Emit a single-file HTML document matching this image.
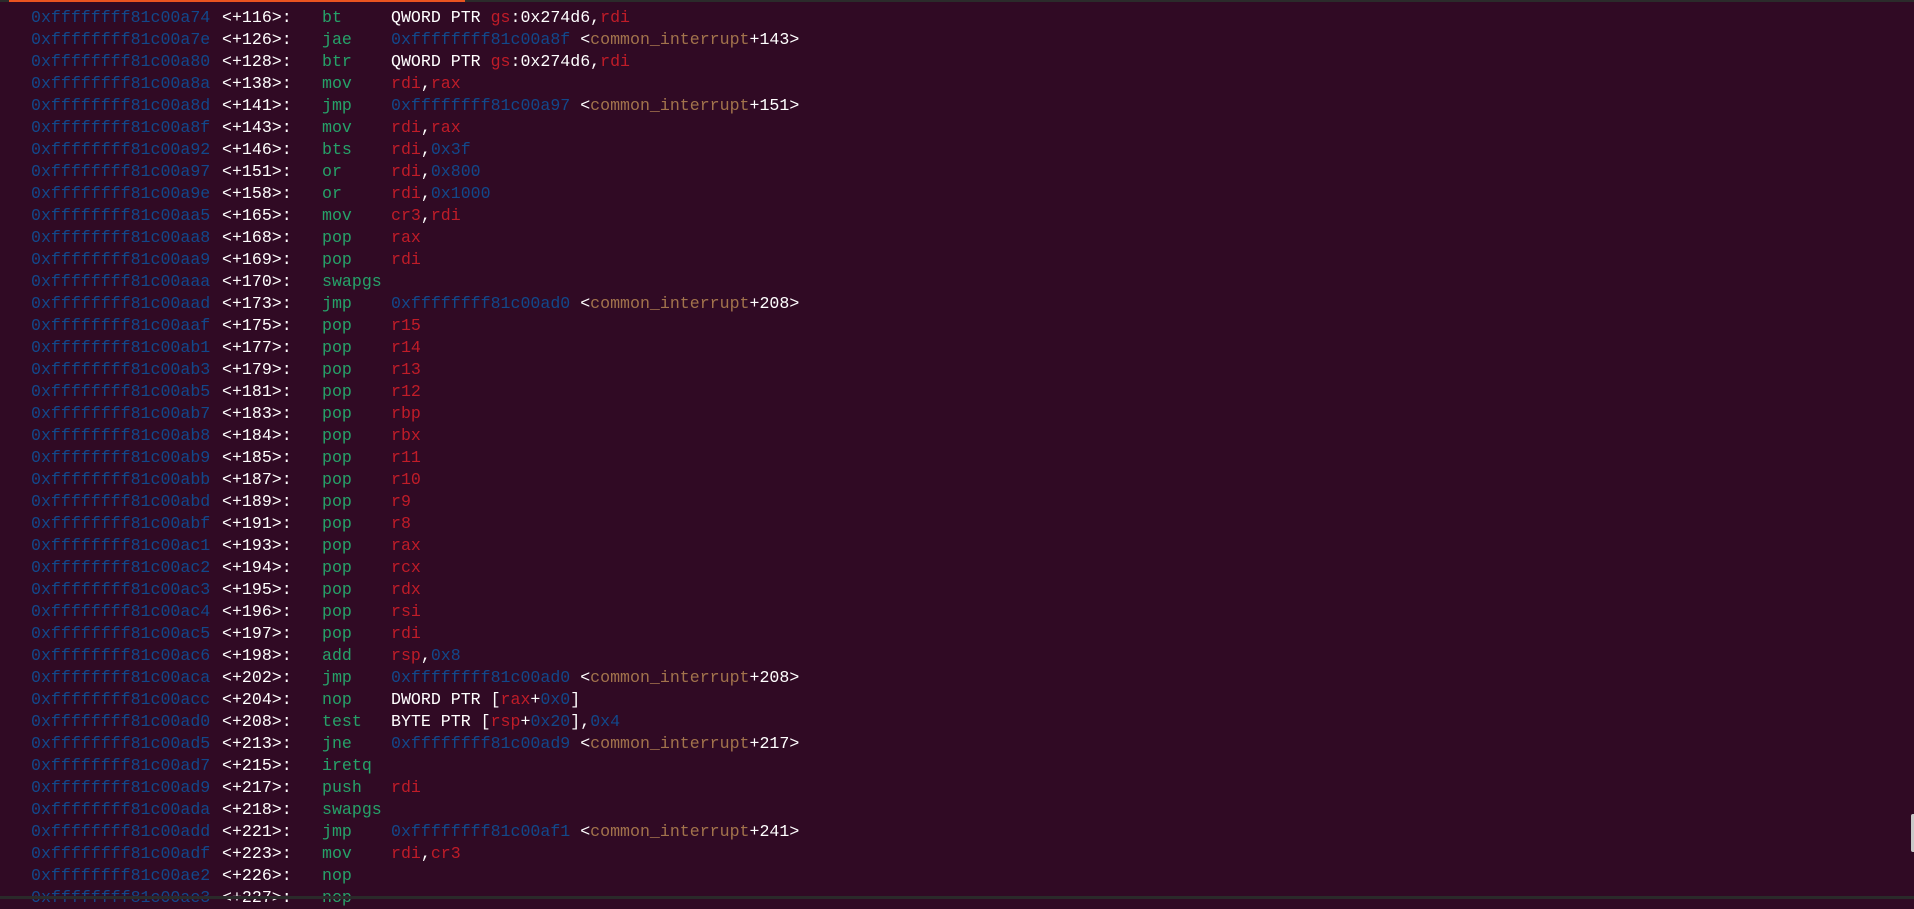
<!DOCTYPE html>
<html><head><meta charset="utf-8"><style>
html,body{margin:0;padding:0;width:1914px;height:899px;overflow:hidden;background:#300a24;}
#top{position:absolute;left:0;top:0;width:1914px;height:2px;background:#2b2b2b;}
#tab{position:absolute;left:9px;top:0;width:456px;height:2px;background:#e95420;}
#bot{position:absolute;left:0;top:896px;width:1914px;height:3px;background:#2a2a2a;}
#sb{position:absolute;left:1911px;top:814px;width:3px;height:38px;background:#c8c8c8;border-radius:2px 0 0 2px;}
.l{position:absolute;left:0;height:22px;line-height:22px;font-family:"Liberation Mono",monospace;font-size:16.6px;white-space:pre;color:#fff;}
.a{position:absolute;left:31px;color:#12488b;}
.o{position:absolute;left:222px;color:#fff;}
.m{position:absolute;left:322px;color:#26a269;}
.p{position:absolute;left:391px;color:#fff;}
.b{color:#12488b}.r{color:#c01c28}.s{color:#a2734c}
</style></head><body>
<div id="top"></div><div id="tab"></div>
<div class="l" style="top:7px"><span class="a">0xffffffff81c00a74</span><span class="o">&lt;+116&gt;:</span><span class="m">bt</span><span class="p">QWORD PTR <span class="r">gs</span>:0x274d6,<span class="r">rdi</span></span></div>
<div class="l" style="top:29px"><span class="a">0xffffffff81c00a7e</span><span class="o">&lt;+126&gt;:</span><span class="m">jae</span><span class="p"><span class="b">0xffffffff81c00a8f</span> &lt;<span class="s">common_interrupt</span>+143&gt;</span></div>
<div class="l" style="top:51px"><span class="a">0xffffffff81c00a80</span><span class="o">&lt;+128&gt;:</span><span class="m">btr</span><span class="p">QWORD PTR <span class="r">gs</span>:0x274d6,<span class="r">rdi</span></span></div>
<div class="l" style="top:73px"><span class="a">0xffffffff81c00a8a</span><span class="o">&lt;+138&gt;:</span><span class="m">mov</span><span class="p"><span class="r">rdi</span>,<span class="r">rax</span></span></div>
<div class="l" style="top:95px"><span class="a">0xffffffff81c00a8d</span><span class="o">&lt;+141&gt;:</span><span class="m">jmp</span><span class="p"><span class="b">0xffffffff81c00a97</span> &lt;<span class="s">common_interrupt</span>+151&gt;</span></div>
<div class="l" style="top:117px"><span class="a">0xffffffff81c00a8f</span><span class="o">&lt;+143&gt;:</span><span class="m">mov</span><span class="p"><span class="r">rdi</span>,<span class="r">rax</span></span></div>
<div class="l" style="top:139px"><span class="a">0xffffffff81c00a92</span><span class="o">&lt;+146&gt;:</span><span class="m">bts</span><span class="p"><span class="r">rdi</span>,<span class="b">0x3f</span></span></div>
<div class="l" style="top:161px"><span class="a">0xffffffff81c00a97</span><span class="o">&lt;+151&gt;:</span><span class="m">or</span><span class="p"><span class="r">rdi</span>,<span class="b">0x800</span></span></div>
<div class="l" style="top:183px"><span class="a">0xffffffff81c00a9e</span><span class="o">&lt;+158&gt;:</span><span class="m">or</span><span class="p"><span class="r">rdi</span>,<span class="b">0x1000</span></span></div>
<div class="l" style="top:205px"><span class="a">0xffffffff81c00aa5</span><span class="o">&lt;+165&gt;:</span><span class="m">mov</span><span class="p"><span class="r">cr3</span>,<span class="r">rdi</span></span></div>
<div class="l" style="top:227px"><span class="a">0xffffffff81c00aa8</span><span class="o">&lt;+168&gt;:</span><span class="m">pop</span><span class="p"><span class="r">rax</span></span></div>
<div class="l" style="top:249px"><span class="a">0xffffffff81c00aa9</span><span class="o">&lt;+169&gt;:</span><span class="m">pop</span><span class="p"><span class="r">rdi</span></span></div>
<div class="l" style="top:271px"><span class="a">0xffffffff81c00aaa</span><span class="o">&lt;+170&gt;:</span><span class="m">swapgs</span></div>
<div class="l" style="top:293px"><span class="a">0xffffffff81c00aad</span><span class="o">&lt;+173&gt;:</span><span class="m">jmp</span><span class="p"><span class="b">0xffffffff81c00ad0</span> &lt;<span class="s">common_interrupt</span>+208&gt;</span></div>
<div class="l" style="top:315px"><span class="a">0xffffffff81c00aaf</span><span class="o">&lt;+175&gt;:</span><span class="m">pop</span><span class="p"><span class="r">r15</span></span></div>
<div class="l" style="top:337px"><span class="a">0xffffffff81c00ab1</span><span class="o">&lt;+177&gt;:</span><span class="m">pop</span><span class="p"><span class="r">r14</span></span></div>
<div class="l" style="top:359px"><span class="a">0xffffffff81c00ab3</span><span class="o">&lt;+179&gt;:</span><span class="m">pop</span><span class="p"><span class="r">r13</span></span></div>
<div class="l" style="top:381px"><span class="a">0xffffffff81c00ab5</span><span class="o">&lt;+181&gt;:</span><span class="m">pop</span><span class="p"><span class="r">r12</span></span></div>
<div class="l" style="top:403px"><span class="a">0xffffffff81c00ab7</span><span class="o">&lt;+183&gt;:</span><span class="m">pop</span><span class="p"><span class="r">rbp</span></span></div>
<div class="l" style="top:425px"><span class="a">0xffffffff81c00ab8</span><span class="o">&lt;+184&gt;:</span><span class="m">pop</span><span class="p"><span class="r">rbx</span></span></div>
<div class="l" style="top:447px"><span class="a">0xffffffff81c00ab9</span><span class="o">&lt;+185&gt;:</span><span class="m">pop</span><span class="p"><span class="r">r11</span></span></div>
<div class="l" style="top:469px"><span class="a">0xffffffff81c00abb</span><span class="o">&lt;+187&gt;:</span><span class="m">pop</span><span class="p"><span class="r">r10</span></span></div>
<div class="l" style="top:491px"><span class="a">0xffffffff81c00abd</span><span class="o">&lt;+189&gt;:</span><span class="m">pop</span><span class="p"><span class="r">r9</span></span></div>
<div class="l" style="top:513px"><span class="a">0xffffffff81c00abf</span><span class="o">&lt;+191&gt;:</span><span class="m">pop</span><span class="p"><span class="r">r8</span></span></div>
<div class="l" style="top:535px"><span class="a">0xffffffff81c00ac1</span><span class="o">&lt;+193&gt;:</span><span class="m">pop</span><span class="p"><span class="r">rax</span></span></div>
<div class="l" style="top:557px"><span class="a">0xffffffff81c00ac2</span><span class="o">&lt;+194&gt;:</span><span class="m">pop</span><span class="p"><span class="r">rcx</span></span></div>
<div class="l" style="top:579px"><span class="a">0xffffffff81c00ac3</span><span class="o">&lt;+195&gt;:</span><span class="m">pop</span><span class="p"><span class="r">rdx</span></span></div>
<div class="l" style="top:601px"><span class="a">0xffffffff81c00ac4</span><span class="o">&lt;+196&gt;:</span><span class="m">pop</span><span class="p"><span class="r">rsi</span></span></div>
<div class="l" style="top:623px"><span class="a">0xffffffff81c00ac5</span><span class="o">&lt;+197&gt;:</span><span class="m">pop</span><span class="p"><span class="r">rdi</span></span></div>
<div class="l" style="top:645px"><span class="a">0xffffffff81c00ac6</span><span class="o">&lt;+198&gt;:</span><span class="m">add</span><span class="p"><span class="r">rsp</span>,<span class="b">0x8</span></span></div>
<div class="l" style="top:667px"><span class="a">0xffffffff81c00aca</span><span class="o">&lt;+202&gt;:</span><span class="m">jmp</span><span class="p"><span class="b">0xffffffff81c00ad0</span> &lt;<span class="s">common_interrupt</span>+208&gt;</span></div>
<div class="l" style="top:689px"><span class="a">0xffffffff81c00acc</span><span class="o">&lt;+204&gt;:</span><span class="m">nop</span><span class="p">DWORD PTR [<span class="r">rax</span>+<span class="b">0x0</span>]</span></div>
<div class="l" style="top:711px"><span class="a">0xffffffff81c00ad0</span><span class="o">&lt;+208&gt;:</span><span class="m">test</span><span class="p">BYTE PTR [<span class="r">rsp</span>+<span class="b">0x20</span>],<span class="b">0x4</span></span></div>
<div class="l" style="top:733px"><span class="a">0xffffffff81c00ad5</span><span class="o">&lt;+213&gt;:</span><span class="m">jne</span><span class="p"><span class="b">0xffffffff81c00ad9</span> &lt;<span class="s">common_interrupt</span>+217&gt;</span></div>
<div class="l" style="top:755px"><span class="a">0xffffffff81c00ad7</span><span class="o">&lt;+215&gt;:</span><span class="m">iretq</span></div>
<div class="l" style="top:777px"><span class="a">0xffffffff81c00ad9</span><span class="o">&lt;+217&gt;:</span><span class="m">push</span><span class="p"><span class="r">rdi</span></span></div>
<div class="l" style="top:799px"><span class="a">0xffffffff81c00ada</span><span class="o">&lt;+218&gt;:</span><span class="m">swapgs</span></div>
<div class="l" style="top:821px"><span class="a">0xffffffff81c00add</span><span class="o">&lt;+221&gt;:</span><span class="m">jmp</span><span class="p"><span class="b">0xffffffff81c00af1</span> &lt;<span class="s">common_interrupt</span>+241&gt;</span></div>
<div class="l" style="top:843px"><span class="a">0xffffffff81c00adf</span><span class="o">&lt;+223&gt;:</span><span class="m">mov</span><span class="p"><span class="r">rdi</span>,<span class="r">cr3</span></span></div>
<div class="l" style="top:865px"><span class="a">0xffffffff81c00ae2</span><span class="o">&lt;+226&gt;:</span><span class="m">nop</span></div>
<div class="l" style="top:887px"><span class="a">0xffffffff81c00ae3</span><span class="o">&lt;+227&gt;:</span><span class="m">nop</span></div>
<div id="bot"></div>
<div id="sb"></div>
</body></html>
